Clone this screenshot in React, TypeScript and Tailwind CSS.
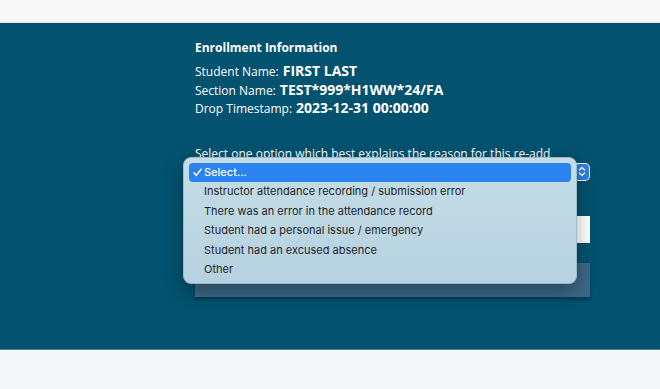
const REASONS = [
  "Instructor attendance recording / submission error",
  "There was an error in the attendance record",
  "Student had a personal issue / emergency",
  "Student had an excused absence",
  "Other",
];

function Stepper() {
  return (
    <div className="absolute right-[1px] top-[1px] flex h-[16px] w-[14px] items-center justify-center rounded-[4px] bg-[#2d7ff0]">
      <svg width="8" height="11" viewBox="0 0 8 11" fill="none">
        <path d="M1.5 4 L4 1.5 L6.5 4" stroke="white" strokeWidth="1.4" strokeLinecap="round" strokeLinejoin="round" />
        <path d="M1.5 7 L4 9.5 L6.5 7" stroke="white" strokeWidth="1.4" strokeLinecap="round" strokeLinejoin="round" />
      </svg>
    </div>
  );
}

function OpenMenu() {
  return (
    <div className="absolute left-[-12px] top-[-6px] z-10 w-[394px] rounded-[8px] border border-[#9fb9c6] bg-gradient-to-b from-[#c4dde7] to-[#b6d2e0] pb-[4px] pt-[5px] shadow-[0_6px_18px_rgba(0,0,0,0.35)] font-['Inter',sans-serif] text-[11px]">
      <div className="mx-[5px] flex h-[19px] items-center rounded-[4px] bg-[#2b83ef] text-white">
        <span className="flex w-[15px] justify-center pl-[1px]">
          <svg width="9" height="9" viewBox="0 0 9 9" fill="none">
            <path d="M1 4.8 L3.4 7.4 L8 1.2" stroke="white" strokeWidth="1.5" strokeLinecap="round" strokeLinejoin="round" />
          </svg>
        </span>
        <span className="font-medium">Select...</span>
      </div>
      {REASONS.map((r) => (
        <div key={r} className="mx-[5px] flex h-[19.6px] items-center pl-[15px] text-[#1f2427]">
          {r}
        </div>
      ))}
    </div>
  );
}

function InfoLine({ label, value }: { label: string; value: string }) {
  return (
    <div className="flex h-[18.5px] items-baseline gap-[4px] text-[12px] leading-[18px]">
      <span>{label}</span>
      <span className="text-[14px] font-bold leading-[18px]">{value}</span>
    </div>
  );
}

export default function App() {
  return (
    <div className="flex h-[389px] w-[660px] flex-col overflow-hidden font-['Open_Sans',sans-serif]">
      <div className="h-[23px] shrink-0 border-b border-[#e2e2e2] bg-[#f8f8f8]" />

      <div className="h-[327px] shrink-0 border-b border-[#4f7c94] bg-[#03526f] pl-[195px] pt-[17px] text-white">
        <div className="w-[395px]">
          <h2 className="text-[12px] font-bold leading-[16px]">Enrollment Information</h2>

          <div className="mt-[6px]">
            <InfoLine label="Student Name:" value="FIRST LAST" />
            <InfoLine label="Section Name:" value="TEST*999*H1WW*24/FA" />
            <InfoLine label="Drop Timestamp:" value="2023-12-31 00:00:00" />
          </div>

          <label className="mt-[28px] block whitespace-nowrap text-[12px] leading-[16px]">
            Select one option which best explains the reason for this re-add
          </label>

          {/* Select (open) */}
          <div className="relative mt-[1px] h-[18px] rounded-[5px] bg-white">
            <Stepper />
            <OpenMenu />
          </div>

          <input
            type="text"
            className="mt-[35px] block h-[27px] w-full bg-white px-2 text-[12px] text-black outline-none"
          />

          <button className="mt-[20px] flex h-[34px] w-full items-center justify-center bg-[#3b6886] text-[12px] font-bold tracking-[0.15em] text-[#1c3a4d] shadow-[0_3px_3px_rgba(0,0,0,0.25)]">
            RE-ADD STUDENT
          </button>
        </div>
      </div>

      <div className="flex-1 bg-[#f6f7f9]" />
    </div>
  );
}
